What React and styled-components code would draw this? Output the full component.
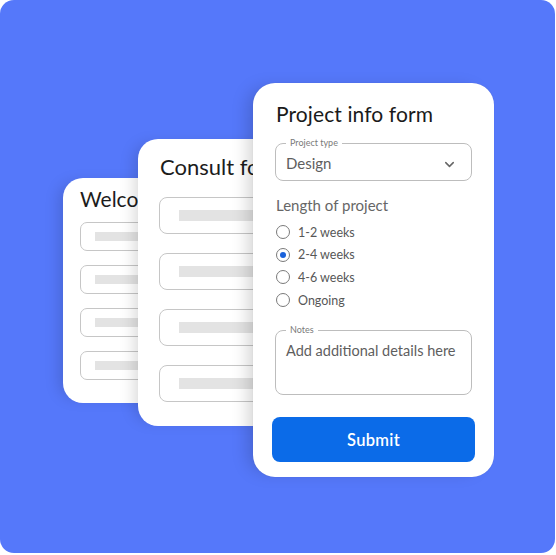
import React from "react";
import styled, { createGlobalStyle } from "styled-components";
import { ChevronDown } from "lucide-react";

const Global = createGlobalStyle`
  html, body { margin: 0; padding: 0; background: #ffffff; }
  body { font-family: Lato, "Noto Sans", sans-serif; }
  * { box-sizing: border-box; }
`;

const Stage = styled.div`
  width: 555px;
  height: 553px;
  background: #5578fa;
  border-radius: 14px;
  overflow: hidden;
  padding: 83px 0 0 63px;
`;

const Stack = styled.div`
  display: grid;
  grid-template-columns: 75px 115px 241px;
  grid-template-rows: auto;
  align-items: start;
`;

const Card = styled.div`
  grid-row: 1;
  grid-column: ${(p) => p.$cols};
  margin-top: ${(p) => p.$top}px;
  height: ${(p) => p.$h}px;
  background: #fff;
  border-radius: ${(p) => p.$r}px;
  overflow: hidden;
  box-shadow: -9px 0 16px -6px rgba(0, 0, 0, 0.16);
  display: flex;
  flex-direction: column;
`;

const BackBody = styled.div`
  display: flex;
  flex-direction: column;
  padding: ${(p) => p.$pad};
  gap: ${(p) => p.$gap}px;
`;

const BackTitle = styled.div`
  font-size: ${(p) => p.$size}px;
  line-height: 1;
  color: #1c1c1c;
  white-space: nowrap;
  margin-bottom: ${(p) => p.$mb}px;
  padding-left: ${(p) => p.$indent}px;
`;

const FakeInput = styled.div`
  width: 320px;
  height: ${(p) => p.$h}px;
  border: 1.5px solid #c6c6c6;
  border-radius: ${(p) => p.$r}px;
  display: flex;
  align-items: center;
  padding-left: ${(p) => p.$pl}px;
  flex-shrink: 0;
`;

const Bar = styled.div`
  width: 260px;
  height: ${(p) => p.$h}px;
  background: #e3e3e3;
`;

const Front = styled(Card)`
  padding: 17px 19px 0 19px;
  box-shadow: -10px 0 18px -6px rgba(0, 0, 0, 0.18), 0 0 1px rgba(0, 0, 0, 0.15);
`;

const Title = styled.h1`
  margin: 0 0 10px 4px;
  font-size: 21px;
  line-height: 28px;
  font-weight: 400;
  color: #1a1a1a;
  letter-spacing: 0.1px;
`;

const Field = styled.fieldset`
  margin: 0 3px;
  padding: 0 14px 0 10px;
  border: 1.5px solid #bdbdbd;
  border-radius: 8px;
  height: ${(p) => p.$h}px;
  display: flex;
  align-items: flex-start;
  justify-content: space-between;
  min-width: 0;
`;

const Legend = styled.legend`
  font-size: 9px;
  line-height: 10px;
  color: #7a7a7a;
  padding: 0 4px;
  margin-left: 0;
`;

const FieldText = styled.span`
  font-size: ${(p) => p.$size}px;
  color: #5e5e5e;
  margin-top: ${(p) => p.$mt || 0}px;
  white-space: nowrap;
`;

const Chevron = styled(ChevronDown)`
  color: #666;
  margin-top: 9px;
`;

const Section = styled.div`
  margin: 15px 0 0 4px;
  font-size: 15px;
  color: #666;
`;

const RadioList = styled.div`
  display: flex;
  flex-direction: column;
  margin: 7px 0 0 4px;
`;

const RadioRow = styled.label`
  display: flex;
  align-items: center;
  gap: 8px;
  height: 22.6px;
  font-size: 12.5px;
  color: #575757;
`;

const Circle = styled.span`
  width: 14px;
  height: 14px;
  border-radius: 50%;
  border: 1.5px solid #7a7a7a;
  display: flex;
  align-items: center;
  justify-content: center;
  &::after {
    content: "";
    width: 6px;
    height: 6px;
    border-radius: 50%;
    background: ${(p) => (p.$on ? "#1a62db" : "transparent")};
  }
`;

const Notes = styled.div`
  margin-top: 14px;
`;

const Button = styled.button`
  margin-top: 22px;
  width: 100%;
  height: 45px;
  flex-shrink: 0;
  border: none;
  border-radius: 8px;
  background: #0b6be8;
  color: #fff;
  font-family: Lato, "Noto Sans", sans-serif;
  font-size: 16.5px;
  font-weight: 600;
  letter-spacing: 0.3px;
`;

const options = [
  { label: "1-2 weeks" },
  { label: "2-4 weeks", on: true },
  { label: "4-6 weeks" },
  { label: "Ongoing" },
];

export default function App() {
  return (
    <>
      <Global />
      <Stage>
        <Stack>
          <Card $cols="1 / 3" $top={94.5} $h={225} $r={20}>
            <BackBody $pad="10px 0 0 16.5px" $gap={14}>
              <BackTitle $size={21} $mb={-1} $indent={0.5}>Welcome form</BackTitle>
              {[0, 1, 2, 3].map((i) => (
                <FakeInput key={i} $h={29} $r={7} $pl={14}>
                  <Bar $h={9} />
                </FakeInput>
              ))}
            </BackBody>
          </Card>
          <Card $cols="2 / 4" $top={56} $h={287} $r={20}>
            <BackBody $pad="17px 0 0 21px" $gap={18.5}>
              <BackTitle $size={22} $mb={0} $indent={1}>Consult form</BackTitle>
              {[0, 1, 2, 3].map((i) => (
                <FakeInput key={i} $h={37.5} $r={8} $pl={19}>
                  <Bar $h={11} />
                </FakeInput>
              ))}
            </BackBody>
          </Card>
          <Front $cols="3 / 4" $top={0} $h={394} $r={22}>
            <Title>Project info form</Title>
            <Field $h={43}>
              <Legend>Project type</Legend>
              <FieldText $size={15} $mt={6}>Design</FieldText>
              <Chevron size={15} strokeWidth={2.4} />
            </Field>
            <Section>Length of project</Section>
            <RadioList>
              {options.map((o) => (
                <RadioRow key={o.label}>
                  <Circle $on={o.on} />
                  {o.label}
                </RadioRow>
              ))}
            </RadioList>
            <Notes>
              <Field $h={70}>
                <Legend>Notes</Legend>
                <FieldText $size={14.5} $mt={7}>Add additional details here</FieldText>
              </Field>
            </Notes>
            <Button>Submit</Button>
          </Front>
        </Stack>
      </Stage>
    </>
  );
}
